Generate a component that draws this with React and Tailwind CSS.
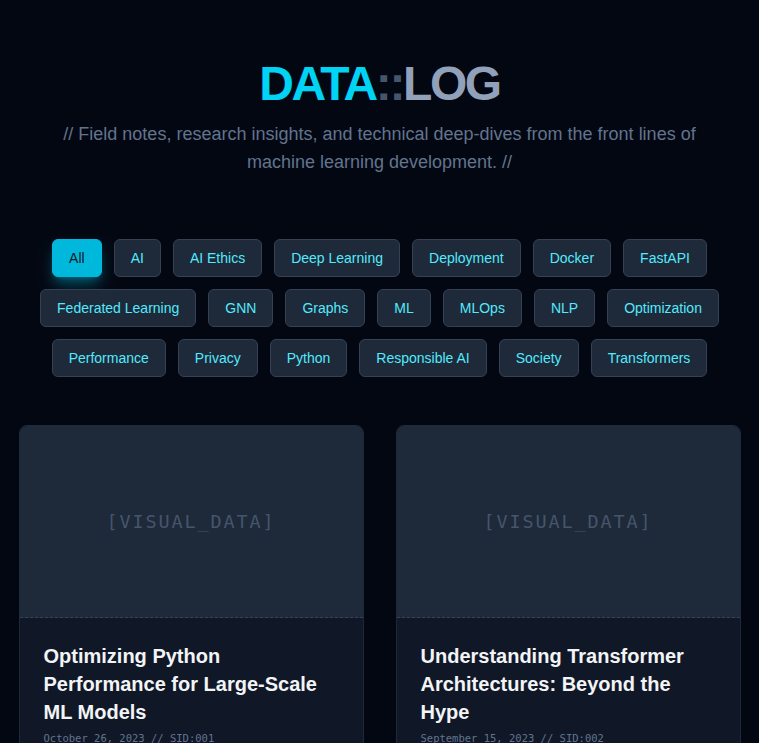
const tags = [
  "All",
  "AI",
  "AI Ethics",
  "Deep Learning",
  "Deployment",
  "Docker",
  "FastAPI",
  "Federated Learning",
  "GNN",
  "Graphs",
  "ML",
  "MLOps",
  "NLP",
  "Optimization",
  "Performance",
  "Privacy",
  "Python",
  "Responsible AI",
  "Society",
  "Transformers",
];

const posts = [
  {
    title: "Optimizing Python Performance for Large-Scale ML Models",
    date: "October 26, 2023",
    sid: "001",
  },
  {
    title: "Understanding Transformer Architectures: Beyond the Hype",
    date: "September 15, 2023",
    sid: "002",
  },
];

function PostCard({ post }) {
  return (
    <article className="overflow-hidden rounded-lg border border-gray-800 bg-gray-900">
      {/* Placeholder visual */}
      <div className="flex h-48 items-center justify-center border-b border-dashed border-gray-700 bg-gray-800">
        <span className="font-['DejaVu_Sans_Mono',monospace] text-[18.5px] tracking-widest text-slate-600">
          [VISUAL_DATA]
        </span>
      </div>
      <div className="px-6 pt-6 pb-6">
        <h3 className="text-xl leading-7 font-bold text-gray-100">{post.title}</h3>
        <p className="mt-1 font-['DejaVu_Sans_Mono',monospace] text-[10.5px] leading-4 text-slate-500">
          {post.date} // SID:{post.sid}
        </p>
      </div>
    </article>
  );
}

export default function App() {
  const active = "All";

  return (
    <div className="min-h-screen bg-gray-950 font-['Liberation_Sans',Arial,sans-serif]">
      {/* Header */}
      <header className="px-4 pt-[60px] text-center">
        <h1 className="text-5xl leading-none font-bold tracking-tighter">
          <span className="text-cyan-400">DATA</span>
          <span className="text-slate-600">::</span>
          <span className="text-slate-400">LOG</span>
        </h1>
        <p className="mx-auto mt-3 max-w-2xl text-lg leading-7 text-slate-500">
          // Field notes, research insights, and technical deep-dives from the front lines of
          machine learning development. //
        </p>
      </header>

      {/* Tag filter */}
      <div className="mt-[63px] flex flex-wrap justify-center gap-3 px-[19px]">
        {tags.map((tag) =>
          tag === active ? (
            <button
              key={tag}
              className="rounded-md border border-cyan-500 bg-cyan-500 px-4 py-2 text-sm leading-5 text-gray-900 shadow-lg shadow-cyan-500/40"
            >
              {tag}
            </button>
          ) : (
            <button
              key={tag}
              className="rounded-md border border-gray-700 bg-gray-800 px-4 py-2 text-sm leading-5 text-cyan-300"
            >
              {tag}
            </button>
          )
        )}
      </div>

      {/* Posts */}
      <main className="mt-12 grid grid-cols-2 gap-8 px-[18.5px] pb-12">
        {posts.map((post) => (
          <PostCard key={post.sid} post={post} />
        ))}
      </main>
    </div>
  );
}
